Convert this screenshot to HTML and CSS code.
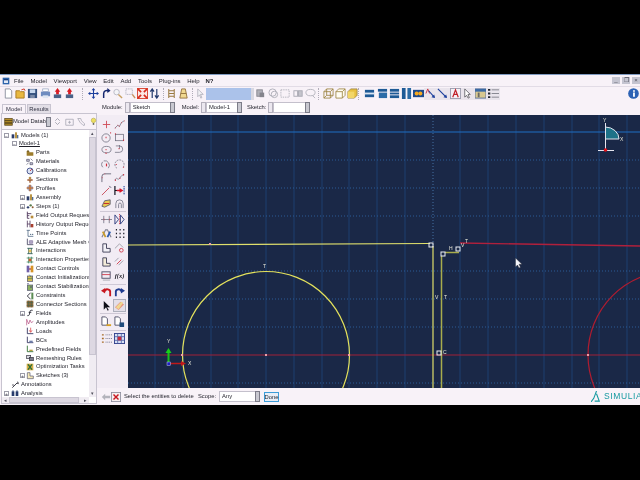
FILE: index.html
```html
<!DOCTYPE html>
<html lang="en">
<head>
<meta charset="utf-8">
<title>Abaqus/CAE</title>
<link rel="stylesheet" href="styles.css">
</head>
<body>
<svg class="defs" aria-hidden="true">
  <symbol id="doc" viewBox="0 0 12 12"><path d="M2.500 1h5l2 2v8h-7z" fill="#fff" stroke="#8a8f9c"/></symbol>
  <symbol id="open" viewBox="0 0 12 12"><path d="M1 3h4l1 1h4v7H1z" fill="#e8b840" stroke="#a87a20"/><path d="M7 2l3-1 1 2" fill="none" stroke="#d03020"/></symbol>
  <symbol id="save" viewBox="0 0 12 12"><rect x="1" y="1" width="10" height="10" fill="#34507e"/><rect x="3" y="1.500" width="6" height="4" fill="#c8d8ee"/><rect x="3.500" y="7.500" width="5" height="3.500" fill="#7a8aa8"/></symbol>
  <symbol id="print" viewBox="0 0 12 12"><rect x="3" y="1" width="6" height="3" fill="#fff" stroke="#8898b8" stroke-width=".7"/><rect x="1" y="4" width="10" height="5" fill="#6f8cc0"/><rect x="3" y="8" width="6" height="3" fill="#dfe6f2"/></symbol>
  <symbol id="redup" viewBox="0 0 12 12"><path d="M6 0l3 4H7.500v3h-3V4H3z" fill="#d81c24"/><rect x="2" y="7" width="8" height="4" fill="#4a6288"/></symbol>
  <symbol id="move" viewBox="0 0 12 12"><path d="M6 0l2 2.500H3.900zM6 12l2-2.500H3.900zM0 6l2.500-2v4zM12 6L9.500 4v4z" fill="#1c3f9c"/><path d="M6 2v8M2 6h8" stroke="#1c3f9c" stroke-width="1.200"/></symbol>
  <symbol id="rot" viewBox="0 0 12 12"><path d="M4 11V6a3.500 3.500 0 0 1 5-3" fill="none" stroke="#14266e" stroke-width="1.600"/><path d="M8 0l3.500 3L8 5.500z" fill="#14266e"/></symbol>
  <symbol id="zoom" viewBox="0 0 12 12"><circle cx="5" cy="4.500" r="3" fill="#f4f4f8" stroke="#b8b8c4"/><path d="M7 7l4 4" stroke="#c8a060" stroke-width="1.500"/></symbol>
  <symbol id="zbox" viewBox="0 0 12 12"><rect x="1" y="1" width="7" height="6" fill="none" stroke="#9ca0b0" stroke-dasharray="1 1"/><path d="M8 7l3 4" stroke="#c8905a" stroke-width="1.500"/></symbol>
  <symbol id="fit" viewBox="0 0 12 12"><rect x=".5" y=".5" width="11" height="11" fill="#fbe7e4" stroke="#d8402c"/><path d="M1 1l3.500 3.500M11 1L7.500 4.500M1 11l3.500-3.500M11 11L7.500 7.500" stroke="#d82a1c" stroke-width="1.800"/></symbol>
  <symbol id="ud" viewBox="0 0 12 12"><path d="M3.500 11V2M1.500 4l2-3 2 3M8.500 1v9M6.500 8l2 3 2-3" fill="none" stroke="#22386c" stroke-width="1.300"/></symbol>
  <symbol id="lad" viewBox="0 0 12 12"><path d="M3 1v10M9 1v10M3 3h6M3 6h6M3 9h6" stroke="#9a7a40" stroke-width="1.100"/></symbol>
  <symbol id="trap" viewBox="0 0 12 12"><path d="M4 1h4l2 10H2z" fill="#f0d890" stroke="#94723c"/><path d="M3 6h6" stroke="#94723c"/></symbol>
  <symbol id="arrow" viewBox="0 0 12 12"><path d="M3 1l6 6H6l1.500 3.500-1.200.5L5 7.500 3 9.500z" fill="#f2f2f6" stroke="#a8a8b4" stroke-width=".8"/></symbol>
  <symbol id="gsq" viewBox="0 0 12 12"><rect x="2" y="2" width="6" height="7" fill="#b0b0b8" stroke="#868690"/><rect x="5" y="5" width="5" height="5" fill="#84848c"/></symbol>
  <symbol id="gcirc" viewBox="0 0 12 12"><circle cx="5" cy="5" r="4" fill="none" stroke="#aeaeb8"/><circle cx="7" cy="7" r="3.500" fill="none" stroke="#aeaeb8"/></symbol>
  <symbol id="gbox" viewBox="0 0 12 12"><rect x="1" y="2" width="9" height="8" fill="none" stroke="#b0b0ba" stroke-dasharray="1.500 1"/></symbol>
  <symbol id="gdots" viewBox="0 0 12 12"><rect x="1" y="3" width="4" height="6" fill="none" stroke="#aaaab4"/><rect x="6" y="3" width="4" height="6" fill="#c4c4cc" stroke="#aaaab4"/></symbol>
  <symbol id="gzoom" viewBox="0 0 12 12"><ellipse cx="6" cy="5" rx="5" ry="3.500" fill="none" stroke="#b4b4bc"/><path d="M8 8l3 3" stroke="#b4b4bc"/></symbol>
  <symbol id="cube1" viewBox="0 0 12 12"><path d="M1 4l3-3h7v7l-3 3H1zM1 4h7v7M8 4l3-3M4 1v7h7M1 11l3-3" fill="none" stroke="#9c8440" stroke-width=".9"/></symbol>
  <symbol id="cube2" viewBox="0 0 12 12"><path d="M1 4l3-3h7v7l-3 3H1zM1 4h7v7M8 4l3-3" fill="#fffdf4" stroke="#9c8440" stroke-width=".9"/></symbol>
  <symbol id="cube3" viewBox="0 0 12 12"><path d="M1 4l3-3h7v7l-3 3H1z" fill="#e8c040" stroke="#9c8440" stroke-width=".9"/><path d="M1 4h7v7H1z" fill="#f2d668"/></symbol>
  <symbol id="bp1" viewBox="0 0 12 12"><rect x="1" y="2" width="10" height="8" fill="#1e5a96"/><rect x="1" y="5" width="10" height="2" fill="#d8e4f2"/></symbol>
  <symbol id="bp2" viewBox="0 0 12 12"><rect x="1" y="1" width="10" height="3" fill="#1e5a96"/><rect x="2" y="5" width="9" height="6" fill="#2c6ca8"/></symbol>
  <symbol id="bp3" viewBox="0 0 12 12"><rect x="1" y="1" width="10" height="3" fill="#1e5a96"/><rect x="1" y="5" width="10" height="2" fill="#1e5a96"/><rect x="1" y="8" width="10" height="3" fill="#1e5a96"/></symbol>
  <symbol id="bp4" viewBox="0 0 12 12"><rect x="1" y="0" width="4" height="12" fill="#1e5a96"/><rect x="7" y="0" width="4" height="12" fill="#2a6aa4"/></symbol>
  <symbol id="eye" viewBox="0 0 12 12"><rect x="0" y="2" width="12" height="8" fill="#1c4a8c"/><circle cx="4" cy="6" r="2.200" fill="#f4a820"/><circle cx="8" cy="6" r="2.200" fill="#f4a820"/></symbol>
  <symbol id="ann1" viewBox="0 0 12 12"><path d="M1 6l2-5 2 5" fill="none" stroke="#c83040"/><path d="M4 3l6 7" stroke="#1c3f9c" stroke-width="1.200"/><path d="M11 11l-4-1 3-3z" fill="#1c3f9c"/></symbol>
  <symbol id="ann2" viewBox="0 0 12 12"><path d="M1 1l9 9" stroke="#1c3f9c" stroke-width="1.200"/><path d="M11 11L7 10l3-3z" fill="#1c3f9c"/></symbol>
  <symbol id="annA" viewBox="0 0 12 12"><rect x=".5" y=".5" width="11" height="11" fill="#f4f0f6" stroke="#9c9cae"/><path d="M3 10l3-8 3 8M4.200 7h3.600" fill="none" stroke="#c02028" stroke-width="1.300"/></symbol>
  <symbol id="ptr" viewBox="0 0 12 12"><path d="M3 1l6 6H6.500l1.500 3.500-1.300.5L5 8 3 10z" fill="#fff" stroke="#4a4a50" stroke-width=".8"/></symbol>
  <symbol id="view" viewBox="0 0 12 12"><rect x="0" y="1" width="12" height="10" fill="#d8c890" stroke="#58709c"/><rect x="0" y="1" width="12" height="3" fill="#3c6aa4"/><rect x="3" y="5" width="2" height="5" fill="#6a6a64"/></symbol>
  <symbol id="list" viewBox="0 0 12 12"><path d="M0 2h2.500M0 6h2.500M0 10h2.500" stroke="#23272f" stroke-width="2"/><path d="M4 2h8M4 6h8M4 10h8" stroke="#80808a"/></symbol>
  <symbol id="info" viewBox="0 0 12 12"><circle cx="6" cy="6" r="5.800" fill="#2c62b4"/><path d="M5.500 2.500h2v1.500h-2zM5.500 5h2v4.500h-2z" fill="#fff"/></symbol>
  <symbol id="db" viewBox="0 0 12 12"><rect x="1" y="2" width="10" height="9" fill="#c89c2c" stroke="#5c4a1c"/><path d="M1 4.500h10M1 7h10M1 9h10" stroke="#302814"/></symbol>
  <symbol id="bulb" viewBox="0 0 12 12"><circle cx="6" cy="4.500" r="3" fill="#eee060" stroke="#a8a040" stroke-width=".7"/><rect x="5" y="8" width="2" height="2.500" fill="#6a6a5a"/></symbol>
  <symbol id="updn" viewBox="0 0 12 12"><path d="M3 5l3-3 3 3M3 7l3 3 3-3" fill="none" stroke="#9c9ca8" stroke-width="1.100"/></symbol>
  <symbol id="exf" viewBox="0 0 12 12"><path d="M1 3h10v8H1z" fill="none" stroke="#a4a4b0"/><path d="M6 5v4M4 7h4" stroke="#a4a4b0"/></symbol>
  <symbol id="wrench" viewBox="0 0 12 12"><path d="M1 2h4l1 3 4 4v2H8L4 7z" fill="none" stroke="#a4a4b0"/></symbol>
  <symbol id="folder" viewBox="0 0 12 12"><path d="M1 3h4v2h6v5H1z" fill="#9c7c2c"/><path d="M2 2h2v2H2z" fill="#604c1c"/></symbol>
  <symbol id="mat" viewBox="0 0 12 12"><path d="M1 2h4v3H1zM6 7h4v3H6zM7 1l3 3M1 10l3-3" fill="#c8c8d4" stroke="#50506c"/></symbol>
  <symbol id="cal" viewBox="0 0 12 12"><circle cx="6" cy="6" r="4.500" fill="#dde4f4" stroke="#2c3c7c" stroke-width="1.200"/><path d="M6 6l3-3" stroke="#c02828" stroke-width="1.200"/></symbol>
  <symbol id="sec" viewBox="0 0 12 12"><circle cx="6" cy="3" r="2" fill="#b89050"/><path d="M2 5h8v2H7v3H5V7H2z" fill="#9c5c34"/></symbol>
  <symbol id="prof" viewBox="0 0 12 12"><path d="M1 6h10M6 1v10" stroke="#c47030" stroke-width="2.400"/><path d="M3 3h6v6H3z" fill="none" stroke="#50507c" stroke-width=".8"/></symbol>
  <symbol id="asm" viewBox="0 0 12 12"><rect x="1" y="5" width="4" height="6" fill="#2c3c68"/><rect x="6" y="2" width="3" height="9" fill="#b89444"/><rect x="9" y="6" width="2" height="5" fill="#506c94"/></symbol>
  <symbol id="steps" viewBox="0 0 12 12"><circle cx="3" cy="8" r="1.800" fill="#30406c"/><circle cx="7" cy="5" r="1.800" fill="#587c4c"/><circle cx="10" cy="8" r="1.500" fill="#8c5c34"/></symbol>
  <symbol id="fo" viewBox="0 0 12 12"><path d="M2 1v10h3M2 4h6M2 7h3" fill="none" stroke="#4c3458" stroke-width="1.300"/><path d="M7 7h4v4H7z" fill="#b88c3c"/></symbol>
  <symbol id="hist" viewBox="0 0 12 12"><path d="M2 1v10M2 6h4M6 1v10" stroke="#4c3458" stroke-width="1.200"/><path d="M7 6h4v5H7z" fill="#a84030"/></symbol>
  <symbol id="time" viewBox="0 0 12 12"><path d="M1 2h5M3 2v9h8" fill="none" stroke="#405c78" stroke-width="1.100"/><circle cx="7" cy="8" r="1" fill="#405c78"/><circle cx="10" cy="8" r="1" fill="#405c78"/></symbol>
  <symbol id="ale" viewBox="0 0 12 12"><path d="M2 1v9h9" fill="none" stroke="#3c3c58" stroke-width="1.200"/><path d="M5 4h5v4H5zM7.500 4v4M5 6h5" fill="none" stroke="#604c88" stroke-width=".8"/></symbol>
  <symbol id="inter" viewBox="0 0 12 12"><path d="M2 2h8M2 10h8M4 2v8M8 2v8" stroke="#2c5c54" stroke-width="1.300"/><rect x="4" y="4" width="4" height="4" fill="#e0c060"/></symbol>
  <symbol id="prop" viewBox="0 0 12 12"><path d="M1 3h10M1 9h10M4 1v10M8 1v10" stroke="#2c7c54" stroke-width="1.100"/><rect x="4" y="4" width="4" height="4" fill="#c86028"/></symbol>
  <symbol id="cc" viewBox="0 0 12 12"><rect x="1" y="1" width="4" height="10" fill="#7060a8"/><rect x="7" y="1" width="4" height="10" fill="#d89428"/><path d="M5 6h2" stroke="#a02020" stroke-width="2"/></symbol>
  <symbol id="ci" viewBox="0 0 12 12"><rect x="2" y="3" width="8" height="8" fill="#d8c050" stroke="#505070"/><path d="M5 1l3 4M2 7h8" stroke="#3c7050"/></symbol>
  <symbol id="cs" viewBox="0 0 12 12"><rect x="2" y="3" width="8" height="8" fill="#8cb060" stroke="#505070"/><path d="M2 1h2M6 6h3" stroke="#3c3c70" stroke-width="1.300"/></symbol>
  <symbol id="con" viewBox="0 0 12 12"><path d="M7 1L2 6l5 5" fill="none" stroke="#30303c" stroke-width="1.400"/><rect x="8" y="1" width="3" height="10" fill="#5c8c54"/></symbol>
  <symbol id="cn" viewBox="0 0 12 12"><rect x="1" y="1" width="10" height="10" fill="#946c3c"/><path d="M1 4h10M1 8h10M4 1v10M8 1v10" stroke="#44604c"/></symbol>
  <symbol id="field" viewBox="0 0 12 12"><path d="M10 2C6 1 6 3 5.500 6S5 10 2 10M4 5h4" fill="none" stroke="#20202c" stroke-width="1.300"/></symbol>
  <symbol id="amp" viewBox="0 0 12 12"><path d="M1 11V2l3 7 2-6 2 4 3-2" fill="none" stroke="#b85888" stroke-width="1.100"/></symbol>
  <symbol id="load" viewBox="0 0 12 12"><path d="M2 1v9h9" fill="none" stroke="#30305c" stroke-width="1.300"/><path d="M7 1v6M5 5l2 3 2-3" fill="none" stroke="#d82828"/></symbol>
  <symbol id="bc" viewBox="0 0 12 12"><path d="M2 1v9h9" fill="none" stroke="#30305c" stroke-width="1.300"/><path d="M5 7h5v3H5z" fill="#6c7ca8"/></symbol>
  <symbol id="pre" viewBox="0 0 12 12"><path d="M2 1v9h9" fill="none" stroke="#2c6c2c" stroke-width="1.300"/><path d="M5 7h5v2H5z" fill="#b8a040"/></symbol>
  <symbol id="rem" viewBox="0 0 12 12"><rect x="1" y="2" width="6" height="5" fill="#d8d8e0" stroke="#30303c"/><rect x="5" y="5" width="6" height="5" fill="#7c7c8c" stroke="#30303c"/></symbol>
  <symbol id="opt" viewBox="0 0 12 12"><rect x="1" y="1" width="10" height="10" fill="#d8b048"/><path d="M3 2l6 8M9 2l-6 8" stroke="#286c38" stroke-width="2"/></symbol>
  <symbol id="sk" viewBox="0 0 12 12"><path d="M2 1v9h9V6H6V1z" fill="#f4e8b8" stroke="#54546c"/></symbol>
  <symbol id="anno" viewBox="0 0 12 12"><path d="M2 10l7-7M9 3l2 1-1-3" fill="none" stroke="#20202c" stroke-width="1.300"/><circle cx="3" cy="6" r="1" fill="#20202c"/></symbol>
  <symbol id="ana" viewBox="0 0 12 12"><rect x="1" y="2" width="4" height="9" fill="#283c6c"/><rect x="7" y="2" width="4" height="9" fill="#283c6c"/><path d="M3 0v3M9 0v3" stroke="#283c6c"/></symbol>
  <symbol id="plus" viewBox="0 0 12 12"><path d="M6 2v8M2 6h8" stroke="#d04c58"/></symbol>
  <symbol id="poly" viewBox="0 0 12 12"><path d="M1 10l3-3 2 1 2-4 3-2" fill="none" stroke="#686878" stroke-width=".8"/><path d="M1 10h.5M4 7h.5M6 8h.5M8 4h.5M11 2h.5" stroke="#d02c3c" stroke-width="1.500"/></symbol>
  <symbol id="circ" viewBox="0 0 12 12"><circle cx="5.500" cy="6.500" r="4.500" fill="none" stroke="#686878" stroke-width=".8"/><path d="M5 6h1M10 1h1" stroke="#d02c3c" stroke-width="1.500"/></symbol>
  <symbol id="rect" viewBox="0 0 12 12"><rect x="1.500" y="2.500" width="9" height="7" fill="none" stroke="#686878" stroke-width=".8"/><path d="M1 2h1M10 9h1" stroke="#d02c3c" stroke-width="1.500"/></symbol>
  <symbol id="ell" viewBox="0 0 12 12"><ellipse cx="6" cy="5" rx="5" ry="3.500" fill="none" stroke="#686878" stroke-width=".8"/><path d="M5 5h1M5 9h1" stroke="#d02c3c" stroke-width="1.500"/></symbol>
  <symbol id="arc1" viewBox="0 0 12 12"><path d="M2 1h4a3 3 0 0 1 0 7H1M6 0v4" fill="none" stroke="#686878" stroke-width=".8"/><path d="M5 4h1" stroke="#d02c3c" stroke-width="1.500"/></symbol>
  <symbol id="arc2" viewBox="0 0 12 12"><path d="M3 2a5 5 0 0 1 5 8" fill="none" stroke="#686878" stroke-width=".8"/><path d="M2 9a4 4 0 0 1 0-6" fill="none" stroke="#686878" stroke-width=".8"/><path d="M6 5v3" stroke="#d02c3c" stroke-width="1.300"/></symbol>
  <symbol id="arc3" viewBox="0 0 12 12"><path d="M3 10a5 5 0 1 1 7-1" fill="none" stroke="#686878" stroke-dasharray="2 1" stroke-width=".8"/><path d="M2 6h1M10 9h1" stroke="#d02c3c" stroke-width="1.300"/></symbol>
  <symbol id="fil" viewBox="0 0 12 12"><path d="M1 11V5a3 3 0 0 1 3-3h7" fill="none" stroke="#686878"/><path d="M1 6h.5M4 2h.5" stroke="#d02c3c" stroke-width="1.500"/></symbol>
  <symbol id="spl" viewBox="0 0 12 12"><path d="M1 9c2-5 3 1 5-2s3-4 5-4" fill="none" stroke="#686878" stroke-width=".8"/><path d="M1 9h1M6 7h1M10 3h1" stroke="#d02c3c" stroke-width="1.500"/></symbol>
  <symbol id="ln" viewBox="0 0 12 12"><path d="M1 11L9 3" stroke="#c84858"/><path d="M9 1l2 2" stroke="#505068"/></symbol>
  <symbol id="bar" viewBox="0 0 12 12"><path d="M1 1v10M1 6h7" stroke="#10101c" stroke-width="1.300"/><path d="M3 6h5M6 4l3 2-3 2" fill="none" stroke="#d8182c" stroke-width="1.400"/><path d="M11 1v10" stroke="#1c3f9c" stroke-dasharray="1 1" stroke-width="1.500"/></symbol>
  <symbol id="crv" viewBox="0 0 12 12"><path d="M1 9l3-6 6-1 0 5-6 3z" fill="#e8c850" stroke="#606070"/><path d="M3 6h6" stroke="#c02030"/></symbol>
  <symbol id="off" viewBox="0 0 12 12"><path d="M2 11V6a4 4 0 0 1 8 0v5M5 11V7a1.500 1.500 0 0 1 3 0v4" fill="none" stroke="#808090"/></symbol>
  <symbol id="tt" viewBox="0 0 12 12"><path d="M0 6h12M3 2v8M9 2v8" stroke="#808090"/><path d="M3 6h.6M9 6h.6" stroke="#d02c3c" stroke-width="1.500"/></symbol>
  <symbol id="mir" viewBox="0 0 12 12"><path d="M1 1l4 5-4 5zM7 1l4 5-4 5z" fill="none" stroke="#304080"/><path d="M6 0v12" stroke="#d02c3c" stroke-dasharray="1 1"/></symbol>
  <symbol id="mult" viewBox="0 0 12 12"><path d="M1 10l4-8h2l4 8" fill="none" stroke="#808090" stroke-width="1.200"/><path d="M2 4l3 6" stroke="#c89c2c" stroke-width="2"/><path d="M10 4l-3 6" stroke="#2c5cb0" stroke-width="2"/></symbol>
  <symbol id="gridd" viewBox="0 0 12 12"><path d="M2 2h1.300M6 2h1.300M10 2h1.300M2 6h1.300M6 6h1.300M10 6h1.300M2 10h1.300M6 10h1.300M10 10h1.300" stroke="#20202c" stroke-width="1.600"/></symbol>
  <symbol id="part" viewBox="0 0 12 12"><path d="M2 2h4v5h4v4H2z" fill="#f2f0f6" stroke="#404058"/></symbol>
  <symbol id="ang" viewBox="0 0 12 12"><path d="M1 7l5-5 4 4" fill="none" stroke="#a0a0a8"/><circle cx="8" cy="9" r="2" fill="none" stroke="#d04050"/></symbol>
  <symbol id="parts" viewBox="0 0 12 12"><path d="M2 2h4v6h4v3H2z" fill="#f4ecd8" stroke="#404058"/></symbol>
  <symbol id="dim" viewBox="0 0 12 12"><path d="M1 6l4-4M5 10l5-5" stroke="#9a9aa8"/><path d="M3 9l5-5" stroke="#d04050"/></symbol>
  <symbol id="frm" viewBox="0 0 12 12"><rect x="1" y="2" width="9" height="7" fill="none" stroke="#505068"/><path d="M1 5h9" stroke="#d04050"/><path d="M2 11h8" stroke="#a8a8b0"/></symbol>
  <symbol id="undo" viewBox="0 0 12 12"><path d="M10 10V6a3 3 0 0 0-6-1" fill="none" stroke="#c81820" stroke-width="2"/><path d="M0 4l4.500-3v6z" fill="#c81820"/></symbol>
  <symbol id="redo" viewBox="0 0 12 12"><path d="M2 10V6a3 3 0 0 1 6-1" fill="none" stroke="#203c90" stroke-width="2"/><path d="M12 4L7.500 1v6z" fill="#203c90"/></symbol>
  <symbol id="sel" viewBox="0 0 12 12"><path d="M3 1l7 7H6.500l2 3-1.200.6L5.500 8 3 10.500z" fill="#101018"/></symbol>
  <symbol id="era" viewBox="0 0 12 12"><path d="M1 8l6-6 4 3-6 6z" fill="#e89880"/><path d="M5 10L2 8l6-6 2 1z" fill="#f0d890"/></symbol>
  <symbol id="skin" viewBox="0 0 12 12"><path d="M1 1h4l2 2v7H1z" fill="#fff" stroke="#505068"/><path d="M6 9h5v2H6z" fill="#d8a020"/></symbol>
  <symbol id="skout" viewBox="0 0 12 12"><path d="M1 1h4l2 2v7H1z" fill="#fff" stroke="#505068"/><rect x="6" y="7" width="5" height="5" fill="#204c7c"/></symbol>
  <symbol id="opts" viewBox="0 0 12 12"><path d="M1 2h2M1 6h2M1 10h2" stroke="#a86c28" stroke-width="1.500"/><path d="M5 2h7M5 6h7M5 10h7" stroke="#707088" stroke-dasharray="1 1"/></symbol>
  <symbol id="tbl" viewBox="0 0 12 12"><rect x=".5" y=".5" width="11" height="11" fill="#d8e0f4" stroke="#30408c"/><path d="M4 1v10M8 1v10M1 4h10M1 8h10" stroke="#5c70b0"/><path d="M4 4h4v4H4z" fill="#c82c3c"/></symbol>
  <symbol id="back" viewBox="0 0 12 12"><path d="M1 6l4-4v2.500h6v3H5V10z" fill="#b4b4bc"/></symbol>
  <symbol id="cancel" viewBox="0 0 12 12"><rect x=".5" y=".5" width="11" height="11" fill="#f8f0f0" stroke="#8c8c9c"/><path d="M3 3l6 6M9 3l-6 6" stroke="#c81820" stroke-width="1.700"/></symbol>
  <symbol id="win" viewBox="0 0 12 12"><rect x="1" y="1" width="10" height="10" fill="#2c64ac"/><rect x="3" y="3" width="6" height="6" fill="#dfe8f6"/><rect x="3" y="3" width="6" height="2" fill="#183c7c"/></symbol>
</svg>

<div class="app">
  <header class="menubar">
    <svg class="menu-logo"><use href="#win"/></svg>
    <nav class="menus">
      <span>File</span><span>Model</span><span>Viewport</span><span>View</span><span>Edit</span><span>Add</span><span>Tools</span><span>Plug-ins</span><span>Help</span><span class="helpq">N?</span>
    </nav>
    <div class="winctl"><i>_</i><i>❐</i><i>×</i></div>
  </header>

  <div class="toolbar">
    <div class="tbg tbg-file"><svg class="ic"><use href="#doc"/></svg><svg class="ic"><use href="#open"/></svg><svg class="ic"><use href="#save"/></svg><svg class="ic"><use href="#print"/></svg><svg class="ic"><use href="#redup"/></svg><svg class="ic"><use href="#redup"/></svg></div>
    <div class="tbg"><svg class="ic"><use href="#move"/></svg><svg class="ic"><use href="#rot"/></svg><svg class="ic"><use href="#zoom"/></svg><svg class="ic"><use href="#zbox"/></svg><svg class="ic"><use href="#fit"/></svg><svg class="ic"><use href="#ud"/></svg></div>
    <div class="tbg tbg-tight"><svg class="ic"><use href="#lad"/></svg><svg class="ic"><use href="#trap"/></svg></div>
    <div class="tbg tbg-sel"><svg class="ic"><use href="#arrow"/></svg><span class="bluefield"></span><span class="bluedrop"></span></div>
    <div class="tbg tbg-grey"><svg class="ic"><use href="#gsq"/></svg><svg class="ic"><use href="#gcirc"/></svg><svg class="ic"><use href="#gbox"/></svg><svg class="ic"><use href="#gdots"/></svg><svg class="ic"><use href="#gzoom"/></svg></div>
    <div class="tbg tbg-cube"><svg class="ic"><use href="#cube1"/></svg><svg class="ic"><use href="#cube2"/></svg><svg class="ic"><use href="#cube3"/></svg></div>
    <div class="tbg tbg-blue"><svg class="ic"><use href="#bp1"/></svg><svg class="ic"><use href="#bp2"/></svg><svg class="ic"><use href="#bp3"/></svg><svg class="ic"><use href="#bp4"/></svg><svg class="ic"><use href="#eye"/></svg></div>
    <div class="tbg tbg-last"><svg class="ic"><use href="#ann1"/></svg><svg class="ic"><use href="#ann2"/></svg><svg class="ic"><use href="#annA"/></svg><svg class="ic"><use href="#ptr"/></svg><svg class="ic"><use href="#view"/></svg><svg class="ic"><use href="#list"/></svg></div>
    <svg class="ic info"><use href="#info"/></svg>
  </div>

  <div class="main">
    <aside class="left">
      <div class="tabs"><span class="tab tab-on">Model</span><span class="tab">Results</span></div>
      <div class="panel">
        <div class="dbrow">
          <svg class="ic-db"><use href="#db"/></svg>
          <span class="dbsel">Model Database</span><span class="drop drop-db"></span>
          <span class="dbtools">
            <svg class="ic-s"><use href="#updn"/></svg><svg class="ic-s"><use href="#exf"/></svg><svg class="ic-s"><use href="#wrench"/></svg><svg class="ic-s"><use href="#bulb"/></svg>
          </span>
        </div>
        <div class="treebox">
          <ul class="tree">
            <li class="l0"><b class="ex">−</b><svg class="ti"><use href="#asm"/></svg>Models (1)</li>
            <li class="l1"><b class="ex">−</b><u>Model-1</u></li>
            <li class="l2"><svg class="ti"><use href="#folder"/></svg>Parts</li>
            <li class="l2"><svg class="ti"><use href="#mat"/></svg>Materials</li>
            <li class="l2"><svg class="ti"><use href="#cal"/></svg>Calibrations</li>
            <li class="l2"><svg class="ti"><use href="#sec"/></svg>Sections</li>
            <li class="l2"><svg class="ti"><use href="#prof"/></svg>Profiles</li>
            <li class="l2"><b class="ex ex2">+</b><svg class="ti"><use href="#asm"/></svg>Assembly</li>
            <li class="l2"><b class="ex ex2">+</b><svg class="ti"><use href="#steps"/></svg>Steps (1)</li>
            <li class="l2"><svg class="ti"><use href="#fo"/></svg>Field Output Requests</li>
            <li class="l2"><svg class="ti"><use href="#hist"/></svg>History Output Requests</li>
            <li class="l2"><svg class="ti"><use href="#time"/></svg>Time Points</li>
            <li class="l2"><svg class="ti"><use href="#ale"/></svg>ALE Adaptive Mesh Constraints</li>
            <li class="l2"><svg class="ti"><use href="#inter"/></svg>Interactions</li>
            <li class="l2"><svg class="ti"><use href="#prop"/></svg>Interaction Properties</li>
            <li class="l2"><svg class="ti"><use href="#cc"/></svg>Contact Controls</li>
            <li class="l2"><svg class="ti"><use href="#ci"/></svg>Contact Initializations</li>
            <li class="l2"><svg class="ti"><use href="#cs"/></svg>Contact Stabilizations</li>
            <li class="l2"><svg class="ti"><use href="#con"/></svg>Constraints</li>
            <li class="l2"><svg class="ti"><use href="#cn"/></svg>Connector Sections</li>
            <li class="l2"><b class="ex ex2">+</b><svg class="ti"><use href="#field"/></svg>Fields</li>
            <li class="l2"><svg class="ti"><use href="#amp"/></svg>Amplitudes</li>
            <li class="l2"><svg class="ti"><use href="#load"/></svg>Loads</li>
            <li class="l2"><svg class="ti"><use href="#bc"/></svg>BCs</li>
            <li class="l2"><svg class="ti"><use href="#pre"/></svg>Predefined Fields</li>
            <li class="l2"><svg class="ti"><use href="#rem"/></svg>Remeshing Rules</li>
            <li class="l2"><svg class="ti"><use href="#opt"/></svg>Optimization Tasks</li>
            <li class="l2"><b class="ex ex2">+</b><svg class="ti"><use href="#sk"/></svg>Sketches (3)</li>
            <li class="l0"><svg class="ti"><use href="#anno"/></svg>Annotations</li>
            <li class="l0"><b class="ex">+</b><svg class="ti"><use href="#ana"/></svg>Analysis</li>
          </ul>
          <div class="vscroll"><span class="sb-up">▴</span><span class="thumb-v"></span><span class="sb-dn">▾</span></div>
          <div class="hscroll"><span class="sb-l">◂</span><span class="thumb-h"></span><span class="sb-r">▸</span></div>
        </div>
      </div>
    </aside>

    <section class="right">
      <div class="ctxbar">
        <label class="ctx ctx-mod">Module:<span class="spin"></span><span class="sel sel-mod">Sketch</span><span class="drop"></span></label>
        <label class="ctx ctx-model">Model:<span class="spin"></span><span class="sel sel-model">Model-1</span><span class="drop"></span></label>
        <label class="ctx ctx-sk">Sketch:<span class="spin"></span><span class="sel sel-sk"></span><span class="drop"></span></label>
      </div>

      <div class="work">
        <div class="toolbox">
          <div class="tgrid tg1">
            <svg class="ic"><use href="#plus"/></svg><svg class="ic"><use href="#poly"/></svg>
            <svg class="ic"><use href="#circ"/></svg><svg class="ic"><use href="#rect"/></svg>
            <svg class="ic"><use href="#ell"/></svg><svg class="ic"><use href="#arc1"/></svg>
            <svg class="ic"><use href="#arc2"/></svg><svg class="ic"><use href="#arc3"/></svg>
            <svg class="ic"><use href="#fil"/></svg><svg class="ic"><use href="#spl"/></svg>
            <svg class="ic"><use href="#ln"/></svg><svg class="ic"><use href="#bar"/></svg>
            <svg class="ic"><use href="#crv"/></svg><svg class="ic"><use href="#off"/></svg>
          </div>
          <div class="tgrid tg2">
            <svg class="ic"><use href="#tt"/></svg><svg class="ic"><use href="#mir"/></svg>
            <svg class="ic"><use href="#mult"/></svg><svg class="ic"><use href="#gridd"/></svg>
            <svg class="ic"><use href="#part"/></svg><svg class="ic"><use href="#ang"/></svg>
            <svg class="ic"><use href="#parts"/></svg><svg class="ic"><use href="#dim"/></svg>
            <svg class="ic"><use href="#frm"/></svg><span class="fx">f(x)</span>
          </div>
          <div class="tgrid tg3">
            <svg class="ic"><use href="#undo"/></svg><svg class="ic"><use href="#redo"/></svg>
            <svg class="ic"><use href="#sel"/></svg><span class="on"><svg class="ic"><use href="#era"/></svg></span>
          </div>
          <div class="tgrid tg4">
            <svg class="ic"><use href="#skin"/></svg><svg class="ic"><use href="#skout"/></svg>
          </div>
          <div class="tgrid tg4">
            <svg class="ic"><use href="#opts"/></svg><svg class="ic"><use href="#tbl"/></svg>
          </div>
        </div>

        <div class="canvas">
          <svg class="scene" viewBox="128 115 512 273">
            <path class="gmajor" d="M155 115v273M183 115v273M211 115v273M238 115v273M266 115v273M294 115v273M322 115v273M349 115v273M377 115v273M405 115v273M460 115v273M488 115v273M516 115v273M544 115v273M572 115v273M599 115v273M627 115v273"/>
            <path class="gminor" d="M128 160h512M128 188h512M128 216h512M128 271h512M128 299h512M128 327h512M128 383h512"/>
            <path class="gdots" d="M433 115v130"/>
            <path class="gbright" d="M128 132h512"/>
            <path class="redl" d="M128 355h512"/>
            <circle class="redc" cx="672" cy="355" r="84"/>
            <path class="redl2" d="M460 243l180 3"/>
            <path class="yel" d="M128 245l302-1.500"/>
            <circle class="yelc" cx="266" cy="355" r="83.500"/>
            <path class="yel" d="M433 246v142"/>
            <path class="olive" d="M441.500 256v132M445 252.500h14"/>
            <rect class="node" x="429" y="243" width="4" height="4"/>
            <rect class="node" x="441" y="252" width="4" height="4"/>
            <rect class="node" x="456" y="247" width="4" height="4"/>
            <rect class="node" x="437" y="351" width="4" height="4"/>
            <g class="pts">
              <rect x="209" y="243" width="2" height="2"/><rect x="265" y="354" width="2" height="2"/>
              <rect x="181" y="354" width="2" height="2"/><rect x="348" y="354" width="2" height="2"/>
              <rect x="587" y="354" width="2" height="2"/>
            </g>
            <g class="lab">
              <text x="263" y="268">T</text>
              <text x="435" y="299">V</text><text x="444" y="299">T</text>
              <text x="449" y="250">H</text><text x="461" y="247">V</text><text x="465" y="243">T</text>
              <text x="443" y="354">C</text>
              <text x="167" y="343">Y</text><text x="188" y="365">X</text>
              <text x="603" y="122">Y</text><text x="620" y="141">X</text>
            </g>
            <path class="tf" d="M605.500 127a14 12 0 0 1 13.500 12h-13.500z"/>
            <path class="tfl" d="M605.500 123v27M598 150.500h16M605.500 127a14 12 0 0 1 13.500 12h-13.500"/>
            <circle class="rdot" cx="605.500" cy="150" r="1.800"/>
            <path class="ax-g" d="M168.500 362v-10"/><path class="ax-gh" d="M168.500 348l-3 5h6z"/>
            <path class="ax-r" d="M170 363.500h12"/><path class="ax-rh" d="M186 363.500l-5-2.500v5z"/>
            <rect class="ax-o" x="167" y="362" width="3.500" height="3.500"/>
            <path class="cur" d="M515.500 258v9l2-2 1.500 3 1.500-.7-1.500-3h3z"/>
          </svg>
        </div>
      </div>

      <footer class="prompt">
        <svg class="ic-p"><use href="#back"/></svg>
        <svg class="ic-p"><use href="#cancel"/></svg>
        <span class="msg">Select the entities to delete</span>
        <span class="scope">Scope:</span>
        <span class="sel sel-scope">Any</span><span class="drop"></span>
        <button class="done">Done</button>
        <span class="brand"><svg class="ds" viewBox="0 0 12 12"><path d="M6 0L3 8 0 12M6 3l3 8H4" fill="none" stroke="#159aa0" stroke-width="1.200"/></svg>SIMULIA</span>
      </footer>
    </section>
  </div>
</div>
</body>
</html>
```

FILE: styles.css
```css
* { box-sizing: border-box; }
html, body { margin: 0; height: 480px; overflow: hidden; background: #000; }
body { padding-top: 74px; font: 5.8px/1 "Liberation Sans", sans-serif; color: #1f1f28; }
.defs { position: absolute; width: 0; height: 0; }
ul { list-style: none; margin: 0; padding: 0; }

.app { width: 640px; height: 331px; background: #f8f2f8; border-top: 1px solid #7f9ac0; filter: blur(.3px); overflow: hidden; }

.ic { width: 11px; height: 11px; flex: none; display: block; }
.ic-s { width: 9px; height: 9px; flex: none; display: block; }
.ic-db { width: 9px; height: 9px; flex: none; display: block; }
.ic-p { width: 10px; height: 10px; flex: none; display: block; }

.menubar { height: 12px; display: flex; align-items: center; padding-left: 2px; border-bottom: 1px solid #e2dce6; }
.menu-logo { width: 8px; height: 8px; }
.menus { display: flex; gap: 6.800px; margin-left: 4px; font-size: 6px; }
.helpq { font-weight: bold; margin-left: -1px; }
.winctl { margin-left: auto; display: flex; gap: 2px; }
.winctl i { width: 8px; height: 7px; background: #c4c4d0; color: #4c4c58; font: 6px/7px "Liberation Sans", sans-serif; text-align: center; }

.toolbar { height: 13px; display: flex; align-items: center; padding-left: 3px; background: #f8f2f8; }
.tbg { display: flex; gap: 1.200px; padding: 0 3px 0 5px; border-right: 1px dotted #b0acb8; height: 12px; align-items: center; }
.tbg-file { padding-left: 0; padding-right: 7px; }
.tbg-tight { padding-left: 2px; }
.tbg-sel { gap: 0; padding: 0 0 0 2px; border-right: 0; }
.tbg-grey { padding: 0 1.500px 0 1px; gap: 1.600px; }
.tbg-cube { padding: 0 .5px 0 4px; gap: 1px; }
.tbg-blue { padding: 0 0 0 5px; border-right: 0; }
.tbg-last { border-right: 0; background: #e9e4ec; padding: 0 1px 0 .5px; gap: 1.600px; }
.bluefield { width: 45px; height: 12px; background: #abc2ea; }
.bluedrop { width: 3px; height: 12px; background: #d8d8e2; }
.info { margin-left: auto; margin-right: 1px; }

.main { display: flex; height: 305px; }
.left { width: 97px; flex: none; display: flex; flex-direction: column; padding-left: 1px; }
.tabs { height: 9px; display: flex; margin-top: 4px; padding-left: 1px; gap: 1px; }
.tab { width: 24px; padding-top: 1.500px; text-align: center; background: #e2dee6; border: 1px solid #c8c4d0; border-bottom: 0; color: #303040; height: 10px; }
.tab-on { width: 24px; background: #f8f2f8; }
.panel { flex: 1; border: 1px solid #c8c4d0; display: flex; flex-direction: column; background: #f8f2f8; margin-bottom: 1px; }
.dbrow { height: 15px; display: flex; align-items: center; padding-left: 2px; }
.dbsel { width: 33px; flex: none; margin-left: 0; white-space: nowrap; overflow: hidden; }
.drop { width: 5px; height: 11px; background: #c8c8d0; border: 1px solid #7c7c88; flex: none; }
.drop-db { height: 10px; }
.dbtools { display: flex; gap: 3px; margin-left: 2px; }
.treebox { flex: 1; position: relative; background: #fff; overflow: hidden; border-top: 1px solid #c8c4d0; }
.tree { padding-top: .5px; width: 88px; height: 266px; overflow: hidden; }
.tree li { height: 8.930px; line-height: 8.930px; display: flex; align-items: center; white-space: nowrap; position: relative; }
.ti { width: 8px; height: 8px; flex: none; margin-right: 2px; }
.l0 { padding-left: 9px; }
.l1 { padding-left: 17px; }
.l2 { padding-left: 24px; }
.tree u { text-decoration-thickness: 1px; }
.ex { position: absolute; left: 2px; top: 2px; width: 5px; height: 5px; border: .7px solid #9c9ca8; font: 5px/4px "Liberation Sans", sans-serif; text-align: center; color: #50505c; background: #fff; }
.l1 .ex { left: 10px; }
.ex2 { left: 18px; }
.vscroll { position: absolute; right: 0; top: 0; bottom: 6px; width: 7px; background: #f0ecf2; display: flex; flex-direction: column; font-size: 5px; text-align: center; color: #50505c; }
.sb-up, .sb-dn { height: 7px; line-height: 7px; }
.thumb-v { flex: none; height: 218px; background: #ddd8e2; border: 1px solid #c8c4d0; }
.sb-dn { margin-top: auto; }
.hscroll { position: absolute; left: 0; right: 7px; bottom: 0; height: 6px; background: #f0ecf2; display: flex; font-size: 5px; line-height: 6px; color: #50505c; }
.sb-l, .sb-r { width: 7px; text-align: center; }
.thumb-h { width: 70px; background: #ddd8e2; border: 1px solid #c8c4d0; }
.sb-r { margin-left: auto; }

.right { flex: 1; display: flex; flex-direction: column; min-width: 0; }
.ctxbar { height: 15px; display: flex; align-items: center; padding-left: 5px; }
.ctx { display: flex; align-items: center; }
.spin { width: 5px; height: 11px; margin: 0 0 0 2px; background: #ece8f0; border: 1px solid #b4b0bc; }
.sel { background: #fff; border: 1px solid #c4c0cc; border-right: 0; height: 11px; line-height: 9px; padding-left: 2px; display: block; }
.sel-mod { width: 40px; }
.ctx-model { margin-left: 7px; }
.sel-model { width: 31px; }
.ctx-sk { margin-left: 5px; }
.sel-sk { width: 32px; }

.work { height: 273px; display: flex; }
.toolbox { width: 31px; flex: none; background: #f2ecf4; padding: 3px 2px 0 3px; display: flex; flex-direction: column; }
.tgrid { display: grid; grid-template-columns: 13px 13px; justify-items: center; align-items: center; }
.tg1 { grid-auto-rows: 13.200px; margin-bottom: 1px; }
.tg2 { grid-auto-rows: 14px; border-top: 1px solid #cfc9d6; }
.tg3 { grid-auto-rows: 12.500px; border-top: 1px solid #cfc9d6; margin-top: 2px; padding-top: 1px; }
.tg4 { grid-auto-rows: 13px; border-top: 1px solid #cfc9d6; margin-top: 2px; padding-top: 1px; }
.fx { font: italic bold 6.500px "Liberation Serif", serif; color: #24242c; }
.on { display: block; border: 1px solid #aeb0bc; background: #e4dfe8; }
.canvas { flex: 1; background: #1a2847; overflow: hidden; }
.scene { display: block; width: 512px; height: 273px; fill: none; }

.gmajor { stroke: #1c3f70; stroke-width: 1; }
.gminor { stroke: #2a5a96; stroke-width: 1; stroke-dasharray: 1 2; }
.gdots { stroke: #4470a4; stroke-dasharray: 1 2; }
.gbright { stroke: #1e6fc4; stroke-width: 1; }
.redl { stroke: #a02038; stroke-width: 1; }
.redc { stroke: #b01c30; stroke-width: 1.200; }
.redl2 { stroke: #b0203c; stroke-width: 1.400; }
.yel { stroke: #e0e06c; stroke-width: 1.200; }
.yelc { stroke: #e4e25c; stroke-width: 1.200; }
.olive { stroke: #a8ac4c; stroke-width: 1.500; }
.node { stroke: #eceef4; stroke-width: 1; }
.pts rect { fill: #e8a0a8; }
.lab text { fill: #e8e8d8; font: 5px "Liberation Sans", sans-serif; }
.tf { fill: #1f7288; }
.tfl { stroke: #e4e4ee; stroke-width: 1; }
.rdot { fill: #e01018; }
.ax-g { stroke: #18c018; stroke-width: 2; }
.ax-gh { fill: #18d018; }
.ax-r { stroke: #c01818; stroke-width: 1.500; }
.ax-rh { fill: #c01818; }
.ax-o { fill: #2020c0; stroke: #c0c8f0; stroke-width: .5; }
.cur { fill: #f4f4f8; stroke: #20202c; stroke-width: .4; }

.prompt { height: 17px; display: flex; align-items: center; padding-left: 4px; background: #f8f2f8; white-space: nowrap; }
.prompt .ic-p { margin-right: 0; }
.msg { margin-left: 3px; width: 68px; }
.scope { margin-left: 6px; }
.sel-scope { width: 36px; margin-left: 3px; }
.done { margin-left: 3.500px; width: 15px; height: 10px; padding: 0; background: #e8eef8; border: 1px solid #3c9cd8; font: 5.800px "Liberation Sans", sans-serif; color: #1f1f28; }
.brand { margin-left: auto; display: flex; align-items: center; gap: 2px; font-size: 8.500px; letter-spacing: .6px; color: #159aa0; width: 49px; overflow: hidden; }
.ds { width: 11px; height: 11px; flex: none; }
```
